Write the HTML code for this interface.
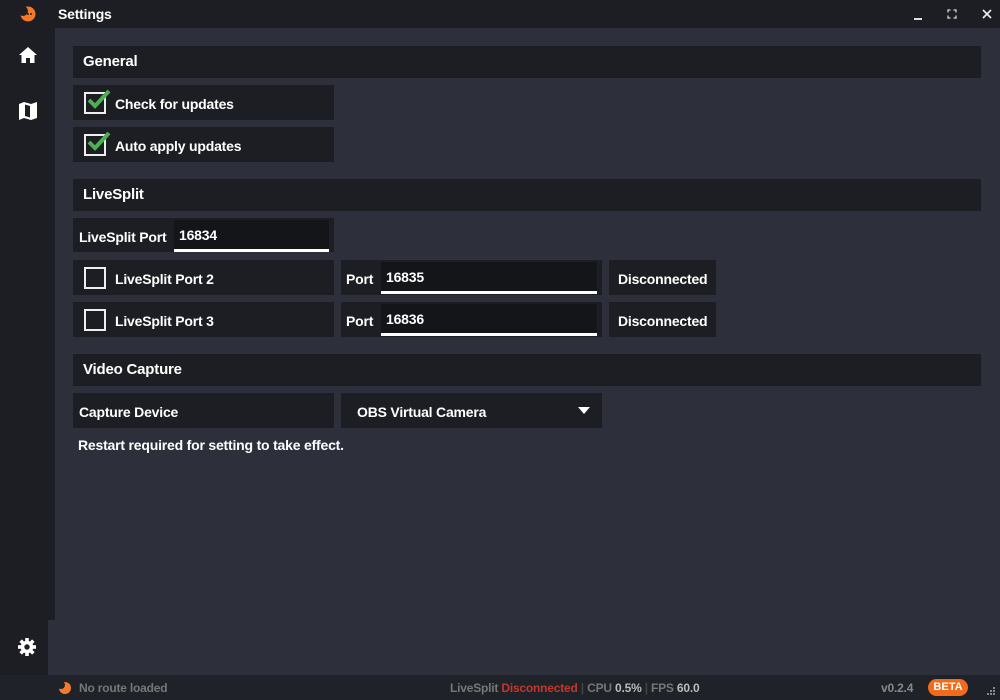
<!DOCTYPE html>
<html><head><meta charset="utf-8"><style>
*{margin:0;padding:0;box-sizing:border-box}
body{width:1000px;height:700px;background:#2d303a;font-family:"Liberation Sans",sans-serif;font-weight:bold;color:#fff;position:relative;overflow:hidden;font-size:14px}
.abs{position:absolute}
.dark{background:#1d1e23}
.t{position:absolute;white-space:nowrap;letter-spacing:-0.2px}
.cb{position:absolute;width:22px;height:22px;border:2px solid #eee;background:#1d1e23}
.inp{position:absolute;background:#141519;border-bottom:3px solid #fff}
</style></head><body>
<div class="abs dark" style="left:0;top:0;width:1000px;height:28px"></div>
<div class="abs dark" style="left:0;top:28px;width:55px;height:592px"></div>
<div class="abs dark" style="left:0;top:620px;width:48px;height:55px"></div>
<div class="abs dark" style="left:0;top:675px;width:1000px;height:25px;background:#202229"></div>
<svg class="abs" style="left:17px;top:5px" width="20" height="18" viewBox="0 0 20 18"><circle cx="11" cy="9" r="7.5" fill="#f47a2a"/><circle cx="6" cy="6" r="5" fill="#1d1e23"/><circle cx="11" cy="9" r="1" fill="#222"/><circle cx="14" cy="9" r="1" fill="#222"/></svg>
<div class="t" style="left:58px;top:6px;font-size:14px">Settings</div>
<div class="abs" style="left:914px;top:18px;width:8px;height:1.5px;background:#ddd"></div>
<svg class="abs" style="left:947px;top:9px" width="10" height="10" viewBox="0 0 10 10" fill="none" stroke="#bbb" stroke-width="1.5"><path d="M1 3.5V1H3.5M6.5 1H9V3.5M9 6.5V9H6.5M3.5 9H1V6.5"/></svg>
<svg class="abs" style="left:982px;top:9px" width="10" height="10" viewBox="0 0 10 10" stroke="#eee" stroke-width="1.6"><path d="M1 1L9 9M9 1L1 9"/></svg>
<svg class="abs" style="left:19px;top:47px" width="18" height="16" viewBox="0 0 18 16" fill="#fff"><path d="M9 0L0 8H2.5V16H7V11H11V16H15.5V8H18Z"/></svg>
<svg class="abs" style="left:19px;top:102px" width="18" height="18" viewBox="0 0 18 18" fill="#fff"><path d="M0 2L5 0L12 2L18 0V16L12 18L5 16L0 18Z"/><path d="M6 2.5L11 4V15.5L6 14Z" fill="#1d1e23"/></svg>
<svg class="abs" style="left:18px;top:638px" width="18" height="18" viewBox="0 0 20 20"><g fill="#fff"><circle cx="10" cy="10" r="7"/><rect x="8" y="0" width="4" height="20"/><rect x="0" y="8" width="20" height="4"/><rect x="8" y="0" width="4" height="20" transform="rotate(45 10 10)"/><rect x="8" y="0" width="4" height="20" transform="rotate(-45 10 10)"/></g><circle cx="10" cy="10" r="3" fill="#1d1e23"/></svg>
<div class="abs dark" style="left:73px;top:46px;width:908px;height:32px"></div>
<div class="t" style="left:83px;top:53px;font-size:15px">General</div>
<div class="abs dark" style="left:73px;top:85px;width:261px;height:35px"></div>
<div class="cb" style="left:84px;top:92px"></div>
<svg class="abs" style="left:86px;top:88px" width="26" height="22" viewBox="0 0 26 22"><path d="M3 12L9 18L23 3" stroke="#4caf50" stroke-width="4" fill="none"/></svg>
<div class="t" style="left:115px;top:96px">Check for updates</div>
<div class="abs dark" style="left:73px;top:127px;width:261px;height:35px"></div>
<div class="cb" style="left:84px;top:134px"></div>
<svg class="abs" style="left:86px;top:130px" width="26" height="22" viewBox="0 0 26 22"><path d="M3 12L9 18L23 3" stroke="#4caf50" stroke-width="4" fill="none"/></svg>
<div class="t" style="left:115px;top:138px">Auto apply updates</div>
<div class="abs dark" style="left:73px;top:179px;width:908px;height:32px"></div>
<div class="t" style="left:83px;top:186px;font-size:15px">LiveSplit</div>
<div class="abs dark" style="left:73px;top:218px;width:261px;height:34px"></div>
<div class="t" style="left:79px;top:229px">LiveSplit Port</div>
<div class="inp" style="left:174px;top:220px;width:155px;height:32px"></div>
<div class="t" style="left:179px;top:227px">16834</div>
<div class="abs dark" style="left:73px;top:260px;width:261px;height:35px"></div>
<div class="cb" style="left:84px;top:267px;background:none"></div>
<div class="t" style="left:115px;top:271px">LiveSplit Port 2</div>
<div class="abs dark" style="left:341px;top:260px;width:261px;height:35px"></div>
<div class="t" style="left:346px;top:271px">Port</div>
<div class="inp" style="left:381px;top:262px;width:216px;height:32px"></div>
<div class="t" style="left:386px;top:269px">16835</div>
<div class="abs dark" style="left:609px;top:260px;width:107px;height:35px"></div>
<div class="t" style="left:618px;top:271px">Disconnected</div>
<div class="abs dark" style="left:73px;top:302px;width:261px;height:35px"></div>
<div class="cb" style="left:84px;top:309px;background:none"></div>
<div class="t" style="left:115px;top:313px">LiveSplit Port 3</div>
<div class="abs dark" style="left:341px;top:302px;width:261px;height:35px"></div>
<div class="t" style="left:346px;top:313px">Port</div>
<div class="inp" style="left:381px;top:304px;width:216px;height:32px"></div>
<div class="t" style="left:386px;top:311px">16836</div>
<div class="abs dark" style="left:609px;top:302px;width:107px;height:35px"></div>
<div class="t" style="left:618px;top:313px">Disconnected</div>
<div class="abs dark" style="left:73px;top:354px;width:908px;height:32px"></div>
<div class="t" style="left:83px;top:361px;font-size:15px">Video Capture</div>
<div class="abs dark" style="left:73px;top:393px;width:261px;height:35px"></div>
<div class="t" style="left:79px;top:404px">Capture Device</div>
<div class="abs dark" style="left:341px;top:393px;width:261px;height:35px"></div>
<div class="t" style="left:357px;top:404px">OBS Virtual Camera</div>
<svg class="abs" style="left:578px;top:407px" width="12" height="8" viewBox="0 0 12 8"><path d="M0 0H12L6 7Z" fill="#fff"/></svg>
<div class="t" style="left:78px;top:437px">Restart required for setting to take effect.</div>
<svg class="abs" style="left:58px;top:679px" width="14" height="16" viewBox="0 0 14 16"><circle cx="7" cy="9" r="6" fill="#f47a2a"/><circle cx="3" cy="6" r="4" fill="#202229"/></svg>
<div class="t" style="left:79px;top:681px;font-size:12px;color:#777">No route loaded</div>
<div class="t" style="left:450px;top:681px;font-size:12px;color:#777">LiveSplit <span style="color:#c0392b">Disconnected</span> <span style="color:#444">|</span> CPU <span style="color:#bbb">0.5%</span> <span style="color:#444">|</span> FPS <span style="color:#bbb">60.0</span></div>
<div class="t" style="left:881px;top:681px;font-size:12px;color:#888">v0.2.4</div>
<div class="abs" style="left:928px;top:679px;width:40px;height:17px;border-radius:9px;background:#f26b1d;font-size:11px;text-align:center;line-height:17px">BETA</div>
<svg class="abs" style="left:986px;top:686px" width="10" height="10" viewBox="0 0 10 10" fill="#888"><rect x="7" y="1" width="2" height="2"/><rect x="4" y="4" width="2" height="2"/><rect x="7" y="4" width="2" height="2"/><rect x="1" y="7" width="2" height="2"/><rect x="4" y="7" width="2" height="2"/><rect x="7" y="7" width="2" height="2"/></svg>
</body></html>
